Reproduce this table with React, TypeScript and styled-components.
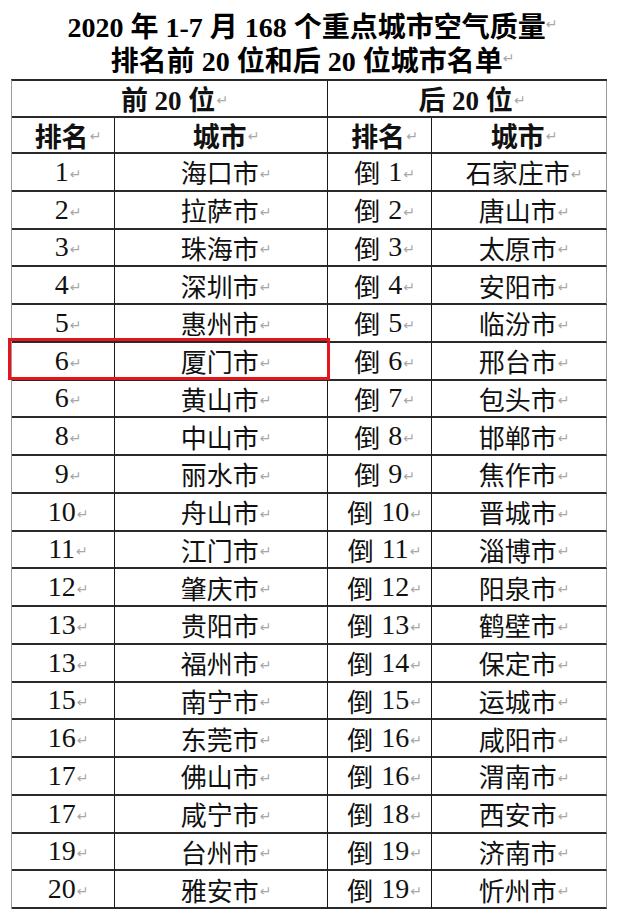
import React from "react";
import styled, { createGlobalStyle } from "styled-components";

const Global = createGlobalStyle`
  html, body { margin: 0; padding: 0; background: #fff; }
  body { width: 625px; height: 913px; overflow: hidden; }
`;

const Page = styled.div`
  width: 625px;
  height: 913px;
  background: #fff;
  color: #111;
  font-family: "Liberation Serif", "Noto Sans CJK SC", serif;
`;

const Title = styled.div`
  padding-top: 11px;
  text-align: center;
  font-size: 28px;
  font-weight: 700;
  color: #000;
`;

const TitleLine = styled.div`
  height: 34px;
  line-height: 34px;
  white-space: nowrap;
  display: flex;
  align-items: center;
  justify-content: center;
`;

const Table = styled.div`
  position: relative;
  display: grid;
  grid-template-columns: 103px 213px 104px 175px;
  grid-template-rows: 37px 36px;
  grid-auto-rows: 37.75px;
  width: 595px;
  margin-left: 11px;
  border-top: 2px solid #2a2a2a;
  border-left: 1px solid #9a9a9a;
`;

const Cell = styled.div<{ $span?: number; $last?: boolean; $bold?: boolean }>`
  box-sizing: border-box;
  grid-column: span ${(p) => p.$span ?? 1};
  display: flex;
  align-items: center;
  justify-content: center;
  padding-left: 10px;
  overflow: hidden;
  border-bottom: 2px solid #2a2a2a;
  border-right: ${(p) => (p.$last ? "1px solid #9a9a9a" : "1.5px solid #1a1a1a")};
  font-size: ${(p) => (p.$bold ? "27px" : "26px")};
  font-weight: ${(p) => (p.$bold ? 700 : 400)};
  white-space: nowrap;
  color: #111;
`;

const Num = styled.span<{ $gap?: boolean }>`
  font-size: 28px;
  margin-left: ${(p) => (p.$gap ? "8px" : "0")};
`;

const Mark = styled.span`
  font-family: "DejaVu Sans", sans-serif;
  font-size: 14px;
  font-weight: 400;
  color: #a8a8a8;
  margin-left: 1px;
  align-self: flex-end;
  margin-bottom: 8px;
`;

const TitleMark = styled.span`
  font-family: "DejaVu Sans", sans-serif;
  font-size: 14px;
  font-weight: 400;
  color: #a8a8a8;
  align-self: flex-end;
  margin-bottom: 4px;
`;

const Highlight = styled.div`
  position: absolute;
  left: -4px;
  top: 257px;
  width: 322px;
  height: 42px;
  box-sizing: border-box;
  border: 3px solid #e8141b;
  pointer-events: none;
`;

const top20: [string, string][] = [
  ["1", "海口市"], ["2", "拉萨市"], ["3", "珠海市"], ["4", "深圳市"], ["5", "惠州市"],
  ["6", "厦门市"], ["6", "黄山市"], ["8", "中山市"], ["9", "丽水市"], ["10", "舟山市"],
  ["11", "江门市"], ["12", "肇庆市"], ["13", "贵阳市"], ["13", "福州市"], ["15", "南宁市"],
  ["16", "东莞市"], ["17", "佛山市"], ["17", "咸宁市"], ["19", "台州市"], ["20", "雅安市"],
];

const bottom20: [string, string][] = [
  ["1", "石家庄市"], ["2", "唐山市"], ["3", "太原市"], ["4", "安阳市"], ["5", "临汾市"],
  ["6", "邢台市"], ["7", "包头市"], ["8", "邯郸市"], ["9", "焦作市"], ["10", "晋城市"],
  ["11", "淄博市"], ["12", "阳泉市"], ["13", "鹤壁市"], ["14", "保定市"], ["15", "运城市"],
  ["16", "咸阳市"], ["16", "渭南市"], ["18", "西安市"], ["19", "济南市"], ["19", "忻州市"],
];

const M = () => <Mark>↵</Mark>;

export default function App() {
  return (
    <Page>
      <Global />
      <Title>
        <TitleLine>
          2020 年 1-7 月 168 个重点城市空气质量<TitleMark>↵</TitleMark>
        </TitleLine>
        <TitleLine>
          排名前 20 位和后 20 位城市名单<TitleMark>↵</TitleMark>
        </TitleLine>
      </Title>
      <Table>
        <Cell $span={2} $bold>
          前 20 位<M />
        </Cell>
        <Cell $span={2} $bold $last>
          后 20 位<M />
        </Cell>
        <Cell $bold>
          排名<M />
        </Cell>
        <Cell $bold>
          城市<M />
        </Cell>
        <Cell $bold>
          排名<M />
        </Cell>
        <Cell $bold $last>
          城市<M />
        </Cell>
        {top20.map((t, i) => (
          <React.Fragment key={i}>
            <Cell>
              <Num>{t[0]}</Num>
              <M />
            </Cell>
            <Cell>
              {t[1]}
              <M />
            </Cell>
            <Cell>
              倒<Num $gap>{bottom20[i][0]}</Num>
              <M />
            </Cell>
            <Cell $last>
              {bottom20[i][1]}
              <M />
            </Cell>
          </React.Fragment>
        ))}
        <Highlight />
      </Table>
    </Page>
  );
}
